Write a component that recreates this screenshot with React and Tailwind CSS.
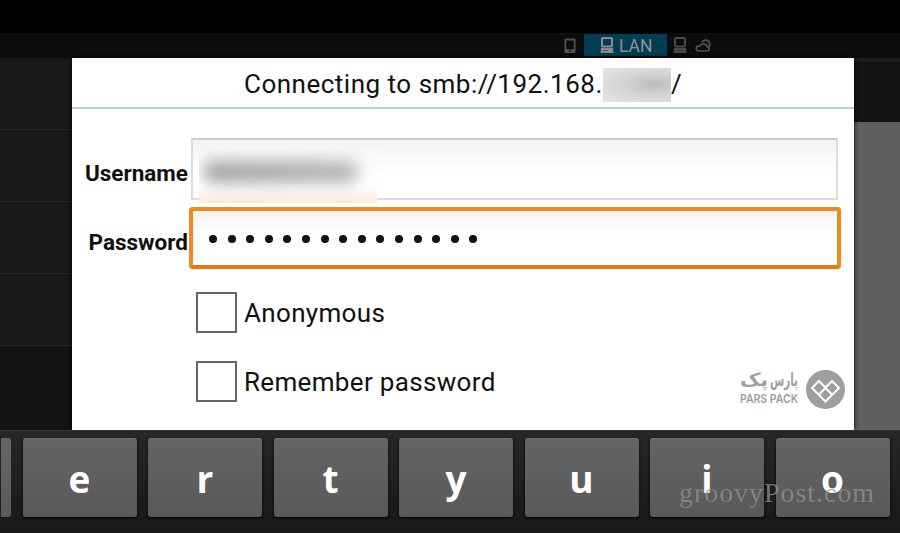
const KEYS = ["e", "r", "t", "y", "u", "i", "o"];

function PhoneIcon() {
  return (
    <svg width="12" height="16" viewBox="0 0 12 16" fill="#525252">
      <path fillRule="evenodd" d="M2 0.5h8a1.5 1.5 0 0 1 1.5 1.5v11.5a1.5 1.5 0 0 1-1.5 1.5h-8a1.5 1.5 0 0 1-1.5-1.5v-11.5a1.5 1.5 0 0 1 1.5-1.5zM2.2 2.5v8.8h7.6v-8.8zM5 12.5v1.2h2v-1.2z" />
    </svg>
  );
}

function ComputerIcon({ color }) {
  return (
    <svg width="14" height="17" viewBox="0 0 14 17" fill="none">
      <rect x="2" y="1" width="10" height="8.5" rx="0.5" stroke={color} strokeWidth="2" />
      <path d="M1 11h12l0.5 5h-13z" fill={color} />
      <path d="M3 13.5h5" stroke="#303840" strokeWidth="0.6" />
    </svg>
  );
}

function CloudIcon() {
  return (
    <svg width="18" height="14" viewBox="0 0 18 14" fill="none" stroke="#505050" strokeWidth="1.7">
      <path d="M4 12h9a2.2 2.2 0 0 0 0-4.4a3.9 3.9 0 0 0-7.3-.6a2.6 2.6 0 0 0-1.7 5z" />
      <path d="M8 3.5a4 4 0 0 1 7.5 0.5a3.5 3.5 0 0 1-1 4" />
    </svg>
  );
}

function TopBar() {
  return (
    <div className="flex h-[25px] shrink-0 items-center bg-[#0c0c0c] pl-[564px]">
      <PhoneIcon />
      <div className="mb-[2px] ml-[8px] flex h-[22px] w-[83px] items-center self-end bg-[#023e52] pl-[16px]">
        <ComputerIcon color="#8a8a90" />
        <span className="ml-[5px] pt-[3px] text-[17.5px] leading-none text-[#8b9296]">LAN</span>
      </div>
      <div className="ml-[6px] flex items-center gap-[7px]">
        <ComputerIcon color="#484848" />
        <CloudIcon />
      </div>
    </div>
  );
}

function Checkbox({ label }) {
  return (
    <div className="flex h-[41px] items-center">
      <div className="size-[41px] border-2 border-[#666] bg-white" />
      <span className="ml-[7px] text-[26px] leading-none tracking-[0.33px]">{label}</span>
    </div>
  );
}

function ParsPackLogo() {
  return (
    <div className="absolute top-[313px] left-[667px] flex items-start">
      <svg className="overflow-visible" width="60" height="40" viewBox="0 0 60 40" fill="#9e9e9e">
        <g fontFamily="DejaVu Sans, sans-serif" fontWeight="bold" fontSize="18">
          <text x="1" y="15" textLength="28" lengthAdjust="spacingAndGlyphs">پک</text>
          <text x="31" y="15" textLength="28" lengthAdjust="spacingAndGlyphs">پارس</text>
        </g>
        <text x="1" y="32" textLength="58" lengthAdjust="spacingAndGlyphs" fontFamily="Inter, sans-serif" fontWeight="600" fontSize="12">PARS PACK</text>
      </svg>
      <svg className="-mt-px ml-[7px]" width="39" height="39" viewBox="0 0 39 39">
        <circle cx="19.5" cy="19.5" r="19.5" fill="#9e9e9e" />
        <path d="M6 18L13 11L19.5 17.5L26 11L33 18L19.5 31.5Z" fill="none" stroke="#fff" strokeWidth="2" />
        <path d="M12.750 24.750L19.500 18L26.250 24.750" fill="none" stroke="#fff" strokeWidth="2" />
      </svg>
    </div>
  );
}

function Dialog() {
  return (
    <div className="relative flex w-[782px] shrink-0 flex-col bg-white text-[#111] shadow-[0_0_5px_#000]">
      <div className="flex h-[51px] items-center border-b-2 border-[#a9d5e4] pl-[172px] text-[26px] tracking-[0.5px]">
        <span className="w-[359px] pt-[4px] whitespace-nowrap">Connecting to smb://192.168.</span>
        <span className="mt-[5px] h-[34px] w-[68px] bg-[radial-gradient(ellipse_at_75%_48%,#bcbcbc_0%,#d2d2d2_40%,#e2e2e2_85%)]" />
        <span className="pt-[4px]">/</span>
      </div>

      {/* Credentials */}
      <div className="mt-[29px] flex h-[62px]">
        <span className="w-[119px] pt-[19px] pr-[3px] text-right text-[22.5px] font-bold">Username</span>
        <div className="relative h-[62px] w-[647px] border-2 border-[#ddd] border-t-[#ccc] bg-linear-to-b from-[#f3f3f3] to-white to-60%">
          <div className="absolute top-[8px] left-[6px] h-[55px] w-[178px] overflow-hidden bg-linear-to-b from-[#f7f7f7] via-white via-70% to-[#fbeadb]">
            <div className="mt-[13px] ml-[5px] h-[22px] w-[153px] rounded-[8px] bg-linear-to-r from-[#a2a2a2] to-[#b4b4b4] blur-[8px]" />
          </div>
        </div>
      </div>
      <div className="mt-[7px] flex h-[62px]">
        <span className="w-[117px] pt-[19px] pr-px text-right text-[22.5px] font-bold">Password</span>
        <div className="flex h-[62px] w-[652px] items-center gap-[10.6px] rounded-[4px] border-4 border-[#f08a1a] border-b-[#e27a10] bg-linear-to-b from-[#f5f5f5] to-white to-50% pt-[2px] pl-[16px]">
          {Array.from({ length: 15 }, (_, i) => (
            <span key={i} className="size-[8px] rounded-full bg-[#111]" />
          ))}
        </div>
      </div>

      <div className="mt-[23px] ml-[124px] flex flex-col gap-[28px]">
        <Checkbox label="Anonymous" />
        <Checkbox label="Remember password" />
      </div>
      <ParsPackLogo />
    </div>
  );
}

function Keyboard() {
  return (
    <div className="relative flex h-[103px] shrink-0 gap-[11.5px] border-t border-[#333] bg-linear-to-b from-[#272727] to-[#181818] pt-[7px] pl-px">
      <div className="h-[79px] w-[10px] shrink-0 rounded-r-[3px] bg-linear-to-b from-[#666] to-[#5a5a5a]" />
      {KEYS.map((k) => (
        <div key={k} className="flex h-[79px] w-[114px] shrink-0 items-center justify-center rounded-[3px] border-t border-[#707070] bg-linear-to-b from-[#646464] to-[#595959] pt-[2px] font-['Open_Sans'] text-[37px] font-bold text-white shadow-[0_1px_3px_#000]">
          {k}
        </div>
      ))}
      <span className="absolute top-[48px] left-[679px] font-['Liberation_Serif'] text-[28px] leading-none tracking-[0.95px] text-[#909090] opacity-75">groovyPost.com</span>
    </div>
  );
}

export default function App() {
  return (
    <div className="flex h-[533px] w-[900px] flex-col overflow-hidden bg-black font-[Roboto,sans-serif]">
      <div className="h-[33px] shrink-0" />
      <TopBar />
      <div className="flex h-[372px] shrink-0">
        <div className="w-[72px] shrink-0 bg-[#181818]">
          {[0, 1, 2, 3].map((n) => (
            <div key={n} className="h-[72px] border-b border-[#242424]" />
          ))}
          <div className="h-[84px] bg-[#131313]" />
        </div>
        <Dialog />
        <div className="flex-1 bg-[#606060]">
          <div className="h-[64px] border-t-4 border-[#1d1d1d] bg-[#141414]" />
        </div>
      </div>
      <Keyboard />
    </div>
  );
}
